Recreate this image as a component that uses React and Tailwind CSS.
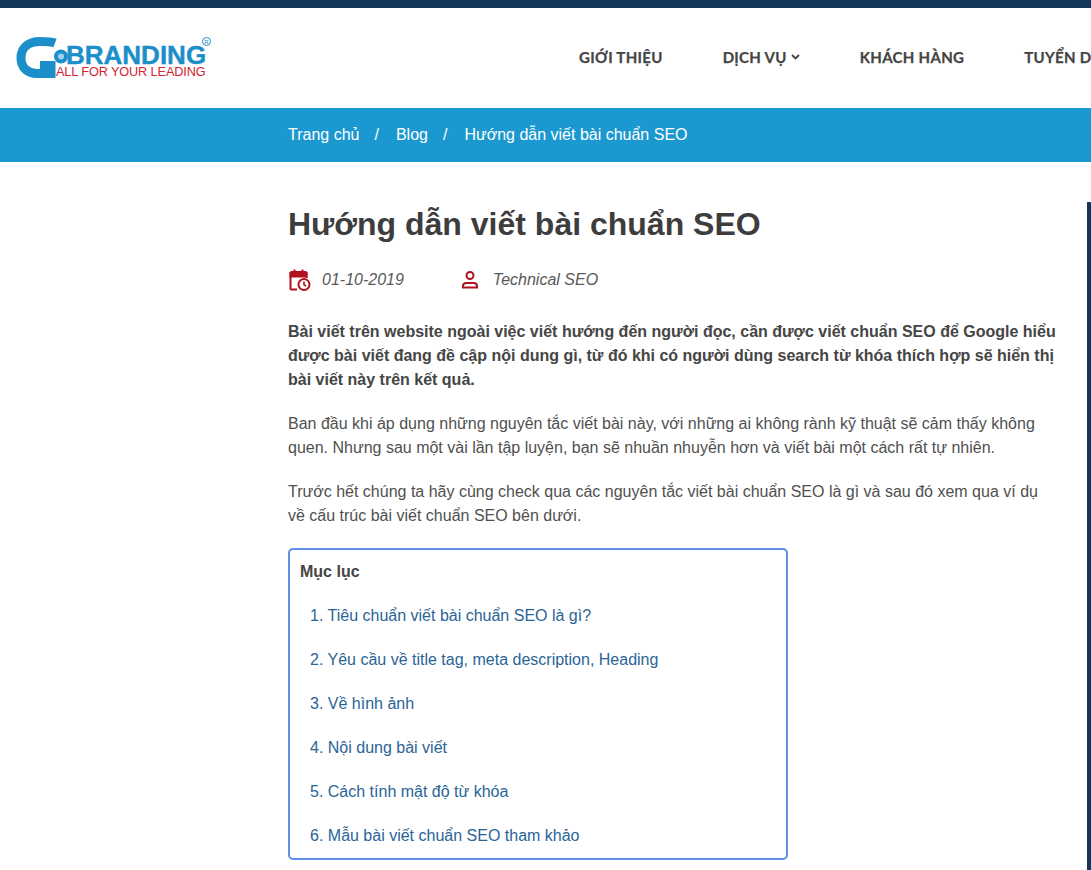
const navItems = ["GIỚI THIỆU", "DỊCH VỤ", "KHÁCH HÀNG", "TUYỂN DỤNG"];

const tocItems = [
  "Tiêu chuẩn viết bài chuẩn SEO là gì?",
  "Yêu cầu về title tag, meta description, Heading",
  "Về hình ảnh",
  "Nội dung bài viết",
  "Cách tính mật độ từ khóa",
  "Mẫu bài viết chuẩn SEO tham khảo",
];

const Logo = () => (
  <div className="relative h-[42px] w-[196px] shrink-0">
    <svg className="absolute left-0 top-0" width="60" height="42" viewBox="0 0 60 42" fill="none">
      <path
        d="M39 6 C35 4.500 30 4.500 24 4.500 C12 4.500 5 11 5 21 C5 31 12 37 22 36.500 L35 36.500 L35 28.500 L24 28.500"
        stroke="#1c8fcb"
        strokeWidth="9"
      />
      <circle cx="45" cy="19.500" r="7" fill="#1c8fcb" />
      <circle cx="45" cy="19.500" r="3" fill="#9fd0ea" />
    </svg>
    <span className="absolute left-[50px] top-[10px] whitespace-nowrap text-[26px] font-bold leading-[16px] text-[#1c8fcb] [-webkit-text-stroke:0.4px_#1c8fcb]">
      BRANDING
    </span>
    <span className="absolute left-[186px] top-0 flex h-[9px] w-[9px] items-center justify-center rounded-full border border-[#1c8fcb] text-[6px] leading-none text-[#1c8fcb]">
      R
    </span>
    <span className="absolute left-[40px] top-[30px] whitespace-nowrap text-[12.7px] leading-[10px] tracking-[-0.1px] text-[#d2232f]">
      ALL FOR YOUR LEADING
    </span>
  </div>
);

const CalendarIcon = () => (
  <svg width="24" height="24" viewBox="0 0 24 24" fill="none" stroke="#b0101f" strokeWidth="2">
    <path d="M9 21.500H3.500a1 1 0 0 1-1-1V5a1 1 0 0 1 1-1h14a1 1 0 0 1 1 1v5" />
    <path d="M2.500 5h16v3.500h-16z" fill="#b0101f" />
    <path d="M6.500 1.500v4M14.500 1.500v4" />
    <circle cx="16" cy="16.500" r="5.500" />
    <path d="M16 13.500v3.300l2.200 1.200" strokeWidth="1.600" />
  </svg>
);

const UserIcon = () => (
  <svg width="20" height="20" viewBox="0 0 20 20" fill="none" stroke="#b0101f" strokeWidth="2">
    <circle cx="10" cy="5.500" r="3.500" />
    <path d="M3 17.500v-1.500c0-2 1.500-3 3.500-3h7c2 0 3.500 1 3.500 3v1.500z" />
  </svg>
);

const App = () => {
  return (
    <div className="h-[870px] w-full overflow-hidden bg-white font-['Liberation_Sans',sans-serif] text-[16px] leading-6 text-[#505050]">
      <div className="h-2 bg-[#12375a]"></div>

      <header className="flex h-[100px] items-center overflow-hidden pl-4 pr-0">
        <Logo />
        <nav className="mb-[3px] ml-[367px] flex shrink-0 gap-[60px] whitespace-nowrap font-['Lato',sans-serif] text-[15px] font-bold tracking-[0.3px] text-[#444444] [-webkit-text-stroke:0.25px_#444444]">
          {navItems.map((item) => (
            <a key={item} className="flex items-center gap-1">
              {item}
              {item === "DỊCH VỤ" && (
                <svg width="9" height="6" viewBox="0 0 9 6" fill="none" stroke="#444444" strokeWidth="1.800">
                  <path d="M1 1l3.500 3.500L8 1" />
                </svg>
              )}
            </a>
          ))}
        </nav>
      </header>

      <div className="flex h-[54px] items-center bg-[#1c98d0] pl-[288px] text-white">
        <span>Trang chủ</span>
        <span className="ml-[15px] mr-[17px]">/</span>
        <span>Blog</span>
        <span className="ml-[15px] mr-[17px]">/</span>
        <span>Hướng dẫn viết bài chuẩn SEO</span>
      </div>

      <div className="flex">
        <main className="ml-[288px] w-[769px] pt-[40px]">
          <h1 className="text-[32px] font-bold leading-[44px] text-[#3d3d3d]">Hướng dẫn viết bài chuẩn SEO</h1>

          <div className="mt-5 flex h-7 items-center italic text-[#595959]">
            <CalendarIcon />
            <span className="ml-[10px]">01-10-2019</span>
            <span className="ml-[56px]">
              <UserIcon />
            </span>
            <span className="ml-[13px]">Technical SEO</span>
          </div>

          <p className="mt-[26px] font-bold text-[#454545]">
            Bài viết trên website ngoài việc viết hướng đến người đọc, cần được viết chuẩn SEO để Google hiểu được bài viết đang đề cập nội dung gì, từ đó khi có người dùng search từ khóa thích hợp sẽ hiển thị bài viết này trên kết quả.
          </p>
          <p className="mt-5">
            Ban đầu khi áp dụng những nguyên tắc viết bài này, với những ai không rành kỹ thuật sẽ cảm thấy không quen. Nhưng sau một vài lần tập luyện, bạn sẽ nhuần nhuyễn hơn và viết bài một cách rất tự nhiên.
          </p>
          <p className="mt-5">
            Trước hết chúng ta hãy cùng check qua các nguyên tắc viết bài chuẩn SEO là gì và sau đó xem qua ví dụ về cấu trúc bài viết chuẩn SEO bên dưới.
          </p>

          <div className="mt-5 h-[312px] w-[500px] rounded-[5px] border-2 border-[#5f91e3] px-[10px] pt-[10px]">
            <div className="font-bold text-[#454545]">Mục lục</div>
            <ol className="mt-5 flex flex-col gap-5 pl-[10px] text-[#2a6496]">
              {tocItems.map((item, i) => (
                <li key={item}>
                  {i + 1}. {item}
                </li>
              ))}
            </ol>
          </div>
        </main>
        <div className="ml-auto mt-10 h-[700px] w-1 bg-[#12375a]"></div>
      </div>
    </div>
  );
};

export default App;
